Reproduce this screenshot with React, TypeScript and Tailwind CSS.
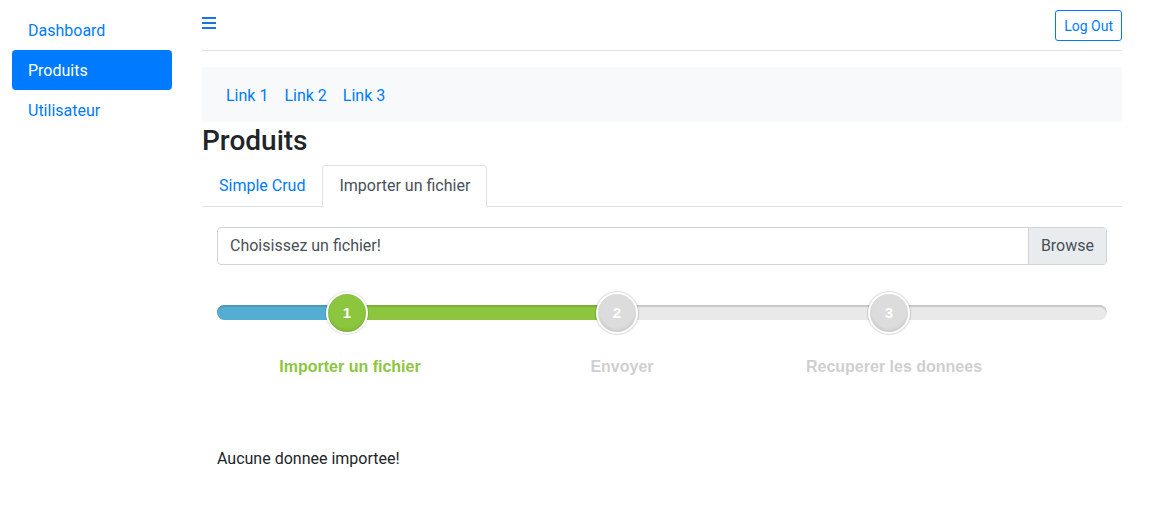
export default function App() {
  return (
    <div className="flex min-h-[521px] bg-white font-['Roboto',sans-serif] text-[16px] leading-6 text-[#212529]">
      <aside className="w-[202px] shrink-0 pl-[12px] pr-[30px] pt-[10px]">
        <nav className="flex flex-col">
          <a className="block px-4 pb-[7px] pt-[9px] leading-6 text-[#007bff]">Dashboard</a>
          <a className="block rounded bg-[#007bff] px-4 pb-[7px] pt-[9px] leading-6 text-white">Produits</a>
          <a className="block px-4 pb-[7px] pt-[9px] leading-6 text-[#007bff]">Utilisateur</a>
        </nav>
      </aside>
      <main className="w-[920px] shrink-0">
        <header className="flex h-[51px] items-start justify-between border-b border-[#dee2e6] pt-[10px]">
          <div className="pt-[7px]">
            <svg width="14" height="12" viewBox="0 0 14 12" className="block">
              <rect x="0" y="0" width="14" height="2" fill="#1a73e8" />
              <rect x="0" y="5" width="14" height="2" fill="#1a73e8" />
              <rect x="0" y="10" width="14" height="2" fill="#1a73e8" />
            </svg>
          </div>
          <button className="h-[31px] rounded-[3px] border border-[#007bff] px-2 pt-[1px] text-[14px] leading-[21px] text-[#007bff]">
            Log Out
          </button>
        </header>

        <div className="mt-4 flex h-[55px] items-center bg-[#f8f9fa] px-4 pt-[2px]">
          <a className="px-2 text-[#007bff]">Link 1</a>
          <a className="px-2 text-[#007bff]">Link 2</a>
          <a className="px-2 text-[#007bff]">Link 3</a>
        </div>

        <h3 className="mb-[7px] mt-[2px] text-[28px] font-medium leading-[34px]">Produits</h3>

        <ul className="flex border-b border-[#dee2e6]">
          <li className="-mb-px">
            <a className="block border border-transparent px-4 py-2 text-[#007bff]">Simple Crud</a>
          </li>
          <li className="-mb-px">
            <a className="block rounded-t border border-[#dee2e6] border-b-white bg-white px-4 py-2 text-[#495057]">
              Importer un fichier
            </a>
          </li>
        </ul>

        <div className="px-[15px] pt-5">
          <div className="flex h-[38px] rounded border border-[#ced4da]">
            <div className="flex flex-1 items-center px-3 text-[#495057]">Choisissez un fichier!</div>
            <div className="flex items-center border-l border-[#ced4da] bg-[#e9ecef] px-3 text-[#495057]">Browse</div>
          </div>

          <div className="relative mt-[40px] h-[15px] rounded-full bg-[#e9e9e9] shadow-[inset_0_2px_1px_rgba(0,0,0,0.15)]">
            <div className="absolute left-0 top-0 h-[15px] w-[115px] rounded-l-full bg-[#54aed2] shadow-[inset_0_2px_1px_rgba(0,0,0,0.12)]" />
            <div className="absolute left-[115px] top-0 h-[15px] w-[268px] bg-[#8cc63f] shadow-[inset_0_2px_1px_rgba(0,0,0,0.12)]" />
            <Step n={1} left="left-[109px]" active />
            <Step n={2} left="left-[379px]" />
            <Step n={3} left="left-[651px]" />
          </div>

          <div className="mt-[38px] flex gap-[72px] pl-[33px] font-['Liberation_Sans',Arial,sans-serif] text-[16px] font-bold leading-[18px]">
            <div className="w-[200px] text-center text-[#8cc63f]">Importer un fichier</div>
            <div className="w-[200px] text-center text-[#cfcfcf]">Envoyer</div>
            <div className="w-[200px] text-center text-[#cfcfcf]">Recuperer les donnees</div>
          </div>

          <p className="mt-[71px] text-[#212529]">Aucune donnee importee!</p>
        </div>
      </main>
    </div>
  );
}

function Step({ n, left, active }: { n: number; left: string; active?: boolean }) {
  return (
    <div
      className={
        "absolute top-[-13px] flex h-[42px] w-[42px] items-center justify-center rounded-full border-2 border-white font-['Liberation_Sans',Arial,sans-serif] text-[15px] font-bold text-white " +
        left +
        " " +
        (active
          ? "bg-[#8cc63f] shadow-[inset_0_-2px_3px_rgba(0,0,0,0.1),0_0_1px_1px_rgba(0,0,0,0.1)]"
          : "bg-[#dcdcdc] shadow-[inset_0_-2px_3px_rgba(0,0,0,0.08),0_0_1px_1px_rgba(0,0,0,0.15)]")
      }
    >
      {n}
    </div>
  );
}
